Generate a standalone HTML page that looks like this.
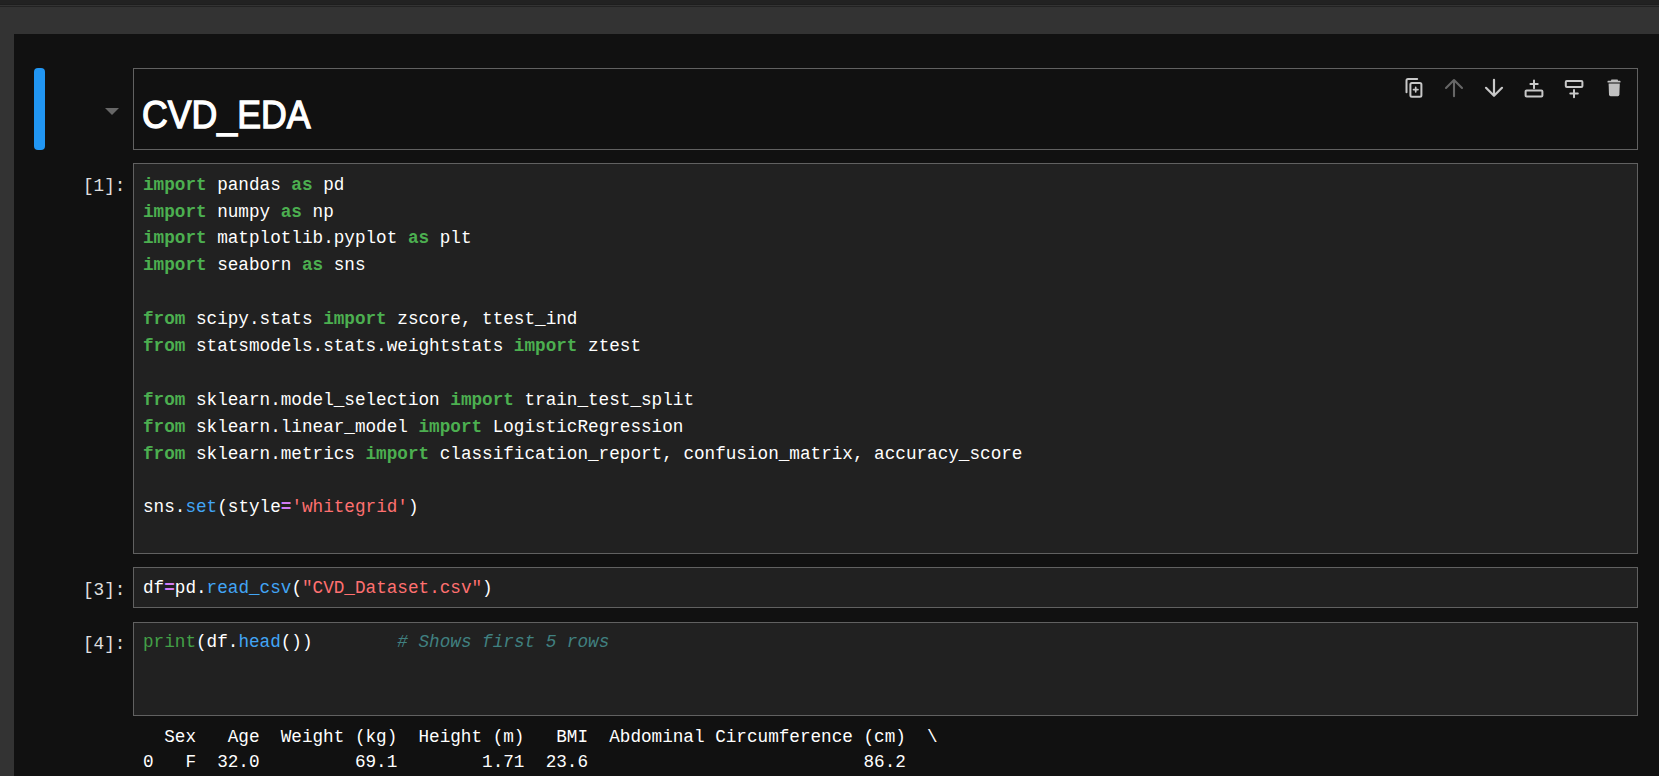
<!DOCTYPE html>
<html><head><meta charset="utf-8">
<style>
html,body{margin:0;padding:0;width:1659px;height:776px;overflow:hidden;background:#333333;}
body{position:relative;font-family:"Liberation Mono",monospace;}
.topbar{position:absolute;left:0;top:0;width:1659px;height:5px;background:linear-gradient(#222222 0,#222222 4px,#1e1e1e 4px,#1e1e1e 5px);}
.topline{position:absolute;left:0;top:5px;width:1659px;height:1px;background:#333333;}
.topdark{position:absolute;left:0;top:6px;width:1659px;height:1px;background:#222222;}
.panel{position:absolute;left:14px;top:34px;right:0;bottom:0;background:#111111;}
.bluebar{position:absolute;left:34px;top:68px;width:11px;height:82px;background:#2196f3;border-radius:4px;}
.tri{position:absolute;left:105px;top:108px;width:0;height:0;border-left:7px solid transparent;border-right:7px solid transparent;border-top:7px solid #676767;}
.box{position:absolute;left:133px;width:1503px;border:1px solid #616161;}
.md{top:68px;height:80px;background:#111111;}
.code{background:#212121;}
.title{position:absolute;left:142px;top:92.5px;font-family:"Liberation Sans",sans-serif;font-weight:normal;-webkit-text-stroke:1.3px #ffffff;font-size:38.6px;color:#ffffff;line-height:44px;white-space:pre;transform:scaleX(0.925);transform-origin:0 0;}
.prompt{position:absolute;left:83px;font-size:17.66px;color:#e0e0e0;white-space:pre;line-height:27px;}
.src{position:absolute;left:143px;font-size:17.66px;color:#ffffff;white-space:pre;line-height:26.9px;}
.k{color:#4caf50;font-weight:bold;}
.b{color:#42a5f5;}
.s{color:#ff7070;}
.o{color:#d27cf5;font-weight:bold;}
.c{color:#408080;font-style:italic;}
.g{color:#43a047;}
.out{position:absolute;left:143px;top:725px;font-size:17.66px;color:#ffffff;white-space:pre;line-height:25px;}
.tb{position:absolute;top:76px;width:24px;height:24px;}
</style></head>
<body>
<div class="topbar"></div><div class="topline"></div><div class="topdark"></div>
<div class="panel"></div>
<div class="bluebar"></div>
<div class="tri"></div>
<div class="box md"></div>
<div class="title">CVD_EDA</div>
<svg class="icons" width="1659" height="120" viewBox="0 0 1659 120" style="position:absolute;left:0;top:0;" fill="none">
<g stroke="#c8c8c8" stroke-width="2" stroke-linecap="round" stroke-linejoin="round">
<path d="M1406.5,92.2 V80.5 Q1406.5,79 1408,79 H1417.2"/>
<rect x="1410.4" y="82.9" width="11" height="13.9" rx="1.5"/>
<path d="M1413.5,89.6 H1418 M1415.7,87.4 V91.8" stroke-width="1.7"/>
<path d="M1494,79.8 V95.5 M1486,87.8 L1494,95.8 L1502,87.8" stroke-width="2.2"/>
<path d="M1534,80.6 V88.2 M1530.4,84 H1537.7"/>
<rect x="1525.6" y="90.6" width="16.8" height="5.8" rx="1"/>
<rect x="1565.8" y="81" width="16.6" height="5.9" rx="1"/>
<path d="M1574,89.9 V97.3 M1570.3,93.5 H1577.8"/>
</g>
<g stroke="#666666" stroke-width="2" stroke-linecap="round" stroke-linejoin="round">
<path d="M1454,80.2 V96.2 M1446,88 L1454,80 L1462,88" stroke-width="2.1"/>
</g>
<g fill="#c0c0c0">
<rect x="1607.5" y="80.8" width="13" height="1.8" rx="0.6"/>
<rect x="1611" y="79.4" width="7" height="2" rx="0.8"/>
<path d="M1608.6,83.4 H1619.8 L1619.4,94.6 Q1619.3,96.2 1617.8,96.2 H1610.6 Q1609.1,96.2 1609,94.6 Z"/>
</g>
</svg>

<div class="box code" style="top:163px;height:389px;"></div>
<div class="prompt" style="top:172.5px;">[1]:</div>
<div class="src" style="top:171.6px;"><span class="k">import</span> pandas <span class="k">as</span> pd
<span class="k">import</span> numpy <span class="k">as</span> np
<span class="k">import</span> matplotlib.pyplot <span class="k">as</span> plt
<span class="k">import</span> seaborn <span class="k">as</span> sns

<span class="k">from</span> scipy.stats <span class="k">import</span> zscore, ttest_ind
<span class="k">from</span> statsmodels.stats.weightstats <span class="k">import</span> ztest

<span class="k">from</span> sklearn.model_selection <span class="k">import</span> train_test_split
<span class="k">from</span> sklearn.linear_model <span class="k">import</span> LogisticRegression
<span class="k">from</span> sklearn.metrics <span class="k">import</span> classification_report, confusion_matrix, accuracy_score

sns.<span class="b">set</span>(style<span class="o">=</span><span class="s">'whitegrid'</span>)</div>

<div class="box code" style="top:567px;height:39px;"></div>
<div class="prompt" style="top:576.5px;">[3]:</div>
<div class="src" style="top:574.9px;">df<span class="o">=</span>pd.<span class="b">read_csv</span>(<span class="s">"CVD_Dataset.csv"</span>)</div>

<div class="box code" style="top:622px;height:92px;"></div>
<div class="prompt" style="top:631px;">[4]:</div>
<div class="src" style="top:629px;"><span class="g">print</span>(df.<span class="b">head</span>())        <span class="c"># Shows first 5 rows</span></div>

<div class="out">  Sex   Age  Weight (kg)  Height (m)   BMI  Abdominal Circumference (cm)  \
0   F  32.0         69.1        1.71  23.6                          86.2</div>
</body></html>
